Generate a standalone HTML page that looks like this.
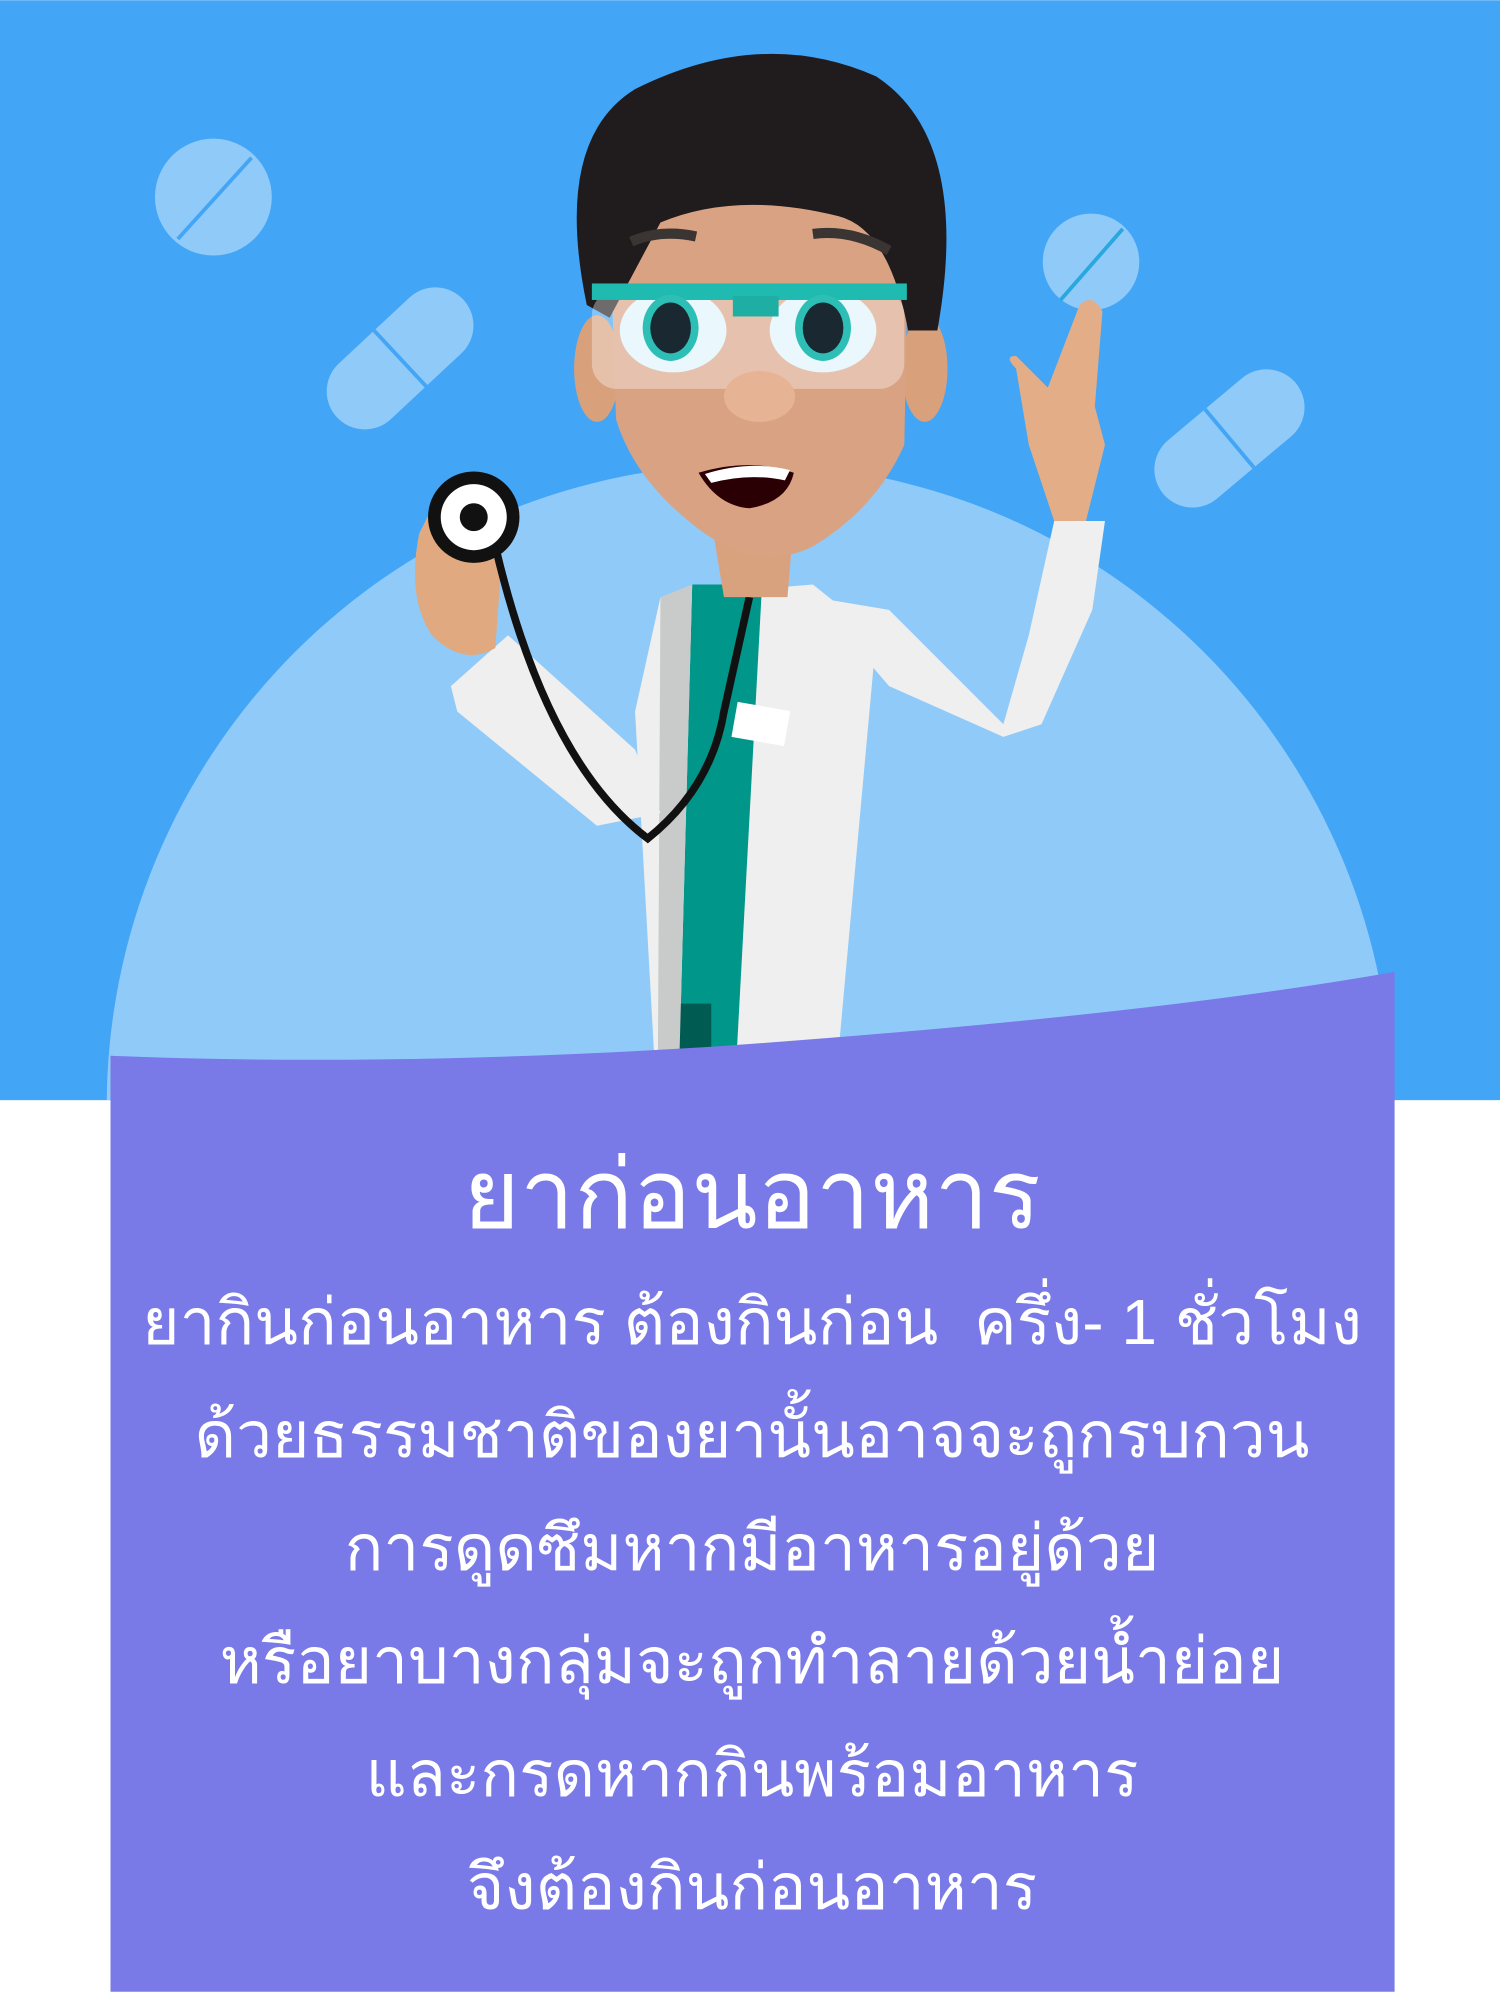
<!DOCTYPE html>
<html><head><meta charset="utf-8"><style>
html,body{margin:0;padding:0;width:1500px;height:1992px;overflow:hidden;background:#fff}
svg{position:absolute;left:0;top:0}
.t{position:absolute;left:60px;width:1384px;text-align:center;color:#fff;font-family:"Liberation Sans","Noto Sans CJK SC",sans-serif;white-space:nowrap;font-weight:300}
</style></head><body>
<svg width="1500" height="1992" viewBox="0 0 1181 1568">
<defs><clipPath id="c"><rect width="1181" height="866"/></clipPath></defs>
<rect width="1181" height="866" fill="#42A5F5"/>
<circle cx="590" cy="871" r="506" fill="#90CAF9" clip-path="url(#c)"/>
<circle cx="168" cy="155" r="46" fill="#90CAF9"/>
<line x1="140" y1="188" x2="198" y2="124" stroke="#42A5F5" stroke-width="3"/>
<circle cx="859" cy="206" r="38" fill="#90CAF9"/>
<line x1="835" y1="236" x2="884" y2="180" stroke="#29A8E0" stroke-width="3"/>
<g transform="translate(315,282) rotate(-43)"><rect x="-68" y="-30" width="136" height="60" rx="30" fill="#90CAF9"/><line x1="0" y1="-30" x2="0" y2="30" stroke="#42A5F5" stroke-width="3"/></g>
<g transform="translate(968,345) rotate(-40)"><rect x="-68" y="-30" width="136" height="60" rx="30" fill="#90CAF9"/><line x1="0" y1="-30" x2="0" y2="30" stroke="#42A5F5" stroke-width="3"/></g>
<path d="M520 470 L640 460 L690 500 L660 830 L515 830 L500 560 Z" fill="#EEEFEE"/>
<path d="M545 460 L600 460 L580 830 L535 830 Z" fill="#00968A"/>
<path d="M535 790 L560 790 L560 830 L535 830Z" fill="#005B52"/>
<path d="M520 470 L545 460 L535 830 L518 830 Z" fill="#C9CACA"/>
<path d="M355 540 L400 500 L500 590 L520 640 L470 650 L360 560Z" fill="#EEEFEE"/>
<path d="M330 420 Q320 470 340 500 Q365 525 390 510 L395 440 Q380 400 350 380 Z" fill="#E1A980"/>
<path d="M640 470 L700 480 L790 570 L810 500 L830 410 L870 410 L860 480 L820 570 L790 580 L700 540 Z" fill="#EEEFEE"/>
<path d="M800 290 Q790 280 800 280 L825 305 L850 240 Q860 230 868 245 L862 320 L870 350 L855 410 L830 410 L810 350 Z" fill="#E3AE87"/>
<path d="M390 430 Q430 600 510 660 Q560 620 570 560 L590 470" fill="none" stroke="#111" stroke-width="6"/>
<circle cx="373" cy="407" r="36" fill="#111"/><circle cx="373" cy="407" r="26" fill="#fff"/><circle cx="373" cy="407" r="11" fill="#111"/>
<rect x="578" y="556" width="42" height="28" fill="#fff" transform="rotate(10 600 570)"/>
<path d="M560 410 L625 410 L620 470 L570 470Z" fill="#D9A27E"/>
<ellipse cx="470" cy="290" rx="18" ry="42" fill="#D9A07C"/>
<ellipse cx="728" cy="290" rx="18" ry="42" fill="#D9A07C"/>
<path d="M480 170 Q600 130 715 190 L712 350 Q690 400 640 430 Q600 450 555 420 Q500 380 485 330 Z" fill="#D9A283"/>
<path d="M462 240 Q435 110 500 70 Q600 20 690 60 Q765 110 738 260 L715 260 Q700 180 660 170 Q580 150 520 175 L480 250 Z" fill="#201C1D"/>
<path d="M497 190 Q520 180 548 186" stroke="#3A3532" stroke-width="8" fill="none"/>
<path d="M640 184 Q670 180 700 197" stroke="#3A3532" stroke-width="8" fill="none"/>
<rect x="466" y="228" width="246" height="78" rx="20" fill="#fff" opacity="0.35"/>
<ellipse cx="530" cy="260" rx="42" ry="33" fill="#EAF7FC"/>
<ellipse cx="648" cy="260" rx="42" ry="33" fill="#EAF7FC"/>
<rect x="466" y="223" width="248" height="13" fill="#1FBAB0"/>
<rect x="577" y="233" width="36" height="16" fill="#1FAEA3"/>
<ellipse cx="528" cy="258" rx="22" ry="26" fill="#2DBFB5"/><ellipse cx="528" cy="258" rx="16" ry="20" fill="#1A2832"/>
<ellipse cx="648" cy="258" rx="22" ry="26" fill="#2DBFB5"/><ellipse cx="648" cy="258" rx="16" ry="20" fill="#1A2832"/>
<ellipse cx="598" cy="312" rx="28" ry="20" fill="#E6B394"/>
<path d="M550 372 Q590 360 625 372 Q620 395 590 400 Q565 398 550 372Z" fill="#2A0005"/>
<path d="M555 373 Q590 362 622 370 L618 378 Q590 372 560 380Z" fill="#fff"/>
<path d="M87 831 Q300 840 560 824 Q900 800 1098 765 L1098 1568 L87 1568 Z" fill="#7979E8"/>
</svg>
<div class="t" style="top:1140px;font-size:97px;line-height:110px">ยาก่อนอาหาร</div>
<div class="t" style="top:1266px;font-size:64px;line-height:113px">ยากินก่อนอาหาร ต้องกินก่อน&nbsp; ครึ่ง- 1 ชั่วโมง<br>ด้วยธรรมชาติของยานั้นอาจจะถูกรบกวน<br>การดูดซึมหากมีอาหารอยู่ด้วย<br>หรือยาบางกลุ่มจะถูกทำลายด้วยน้ำย่อย<br>และกรดหากกินพร้อมอาหาร<br>จึงต้องกินก่อนอาหาร</div>
</body></html>
